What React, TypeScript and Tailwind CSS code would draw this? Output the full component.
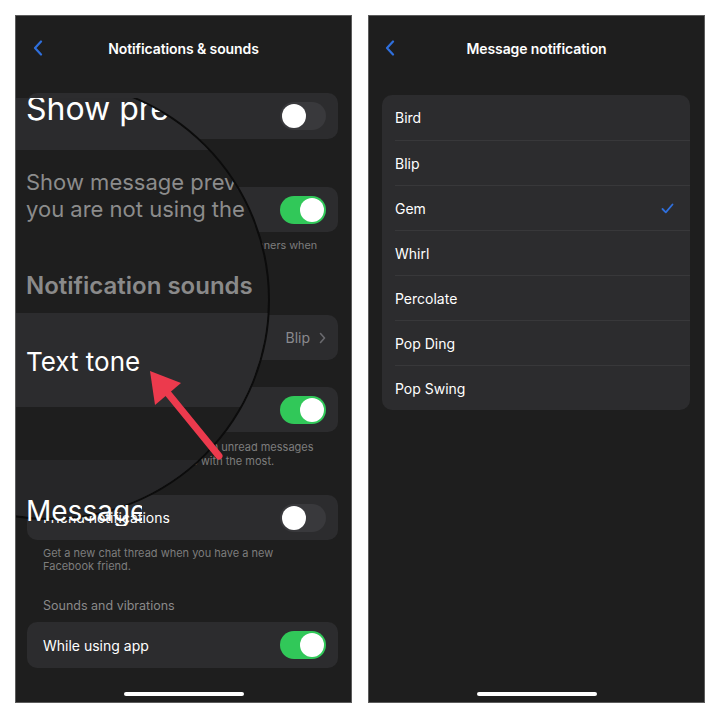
import React from 'react';

const Toggle = ({ on }: { on: boolean }) => (
    <div
        className={`w-[46px] h-[28px] rounded-full p-[2px] flex ${on ? 'bg-[#31c859] justify-end' : 'bg-[#39393c] justify-start'}`}
    >
        <div className="w-[24px] h-[24px] rounded-full bg-white" />
    </div>
);

const BackChevron = () => (
    <svg width="10" height="16" viewBox="0 0 10 16" fill="none">
        <path d="M8 1.5 L2 8 L8 14.5" stroke="#2f6fdc" strokeWidth="2.2" strokeLinecap="round" strokeLinejoin="round" />
    </svg>
);

const NavBar = ({ title, pad }: { title: string; pad: string }) => (
    <div className="h-[64px] shrink-0 grid grid-cols-[1fr_auto_1fr] items-center">
        <div className={pad}>
            <BackChevron />
        </div>
        <div className="text-[14px] font-semibold text-white tracking-[-0.1px]">{title}</div>
        <div />
    </div>
);

const Card = ({ children, className = '' }: { children: React.ReactNode; className?: string }) => (
    <div className={`ml-[11px] mr-[13px] h-[45px] rounded-[10px] bg-[#2c2c2e] flex items-center justify-between pl-4 pr-[12px] ${className}`}>
        {children}
    </div>
);

const HomeBar = () => <div className="mt-auto mb-[6px] self-center w-[120px] h-[4px] rounded-full bg-white" />;

const tones = ['Bird', 'Blip', 'Gem', 'Whirl', 'Percolate', 'Pop Ding', 'Pop Swing'];

const LeftPhone = () => (
    <div className="relative w-[337px] h-[688px] bg-[#1e1e1e] border border-[#5c5c5c] overflow-hidden flex flex-col">
        <NavBar title="Notifications & sounds" pad="pl-[17px]" />

        <Card className="mt-[13px] h-[46px]">
            <span className="text-[14px] text-white">Show previews</span>
            <Toggle on={false} />
        </Card>

        <Card className="mt-[48px]">
            <span className="text-[14px] text-white">Message previews</span>
            <Toggle on />
        </Card>
        <div className="ml-[27px] mt-[7px] text-[10.8px] leading-[13px] text-[#7d7d7d] whitespace-nowrap">
            <div>Show message previews in notification banners when</div>
            <div>you are not using the app.</div>
        </div>

        <div className="ml-[27px] mt-[22px] text-[12.5px] leading-[16px] text-[#8a8a8a]">Notification sounds</div>

        <Card className="mt-[12px]">
            <span className="text-[14px] text-white">Text tone</span>
            <div className="flex items-center gap-[9px] text-[14px] text-[#8a8a8e]">
                <span>Blip</span>
                <svg width="7" height="12" viewBox="0 0 7 12" fill="none">
                    <path d="M1.5 1.5 L5.5 6 L1.5 10.5" stroke="#6a6a6e" strokeWidth="1.6" strokeLinecap="round" strokeLinejoin="round" />
                </svg>
            </div>
        </Card>

        <Card className="mt-[27px]">
            <span className="text-[14px] text-white">Reminders</span>
            <Toggle on />
        </Card>
        <div className="ml-[27px] mt-[8px] text-[11px] leading-[14px] text-[#7d7d7d] whitespace-nowrap">
            <div>Get notified of conversations with unread messages</div>
            <div>from the people you message with the most.</div>
        </div>

        <Card className="mt-[27px]">
            <span className="text-[14px] text-white">Friend notifications</span>
            <Toggle on={false} />
        </Card>
        <div className="ml-[27px] mt-[7px] text-[11px] leading-[13px] text-[#7d7d7d]">
            <div>Get a new chat thread when you have a new</div>
            <div>Facebook friend.</div>
        </div>

        <div className="ml-[27px] mt-[25px] text-[12.5px] leading-[16px] text-[#8a8a8a]">Sounds and vibrations</div>

        <Card className="mt-[8px] h-[46px]">
            <span className="text-[14px] text-white">While using app</span>
            <Toggle on />
        </Card>

        <HomeBar />

        {/* magnifier lens, its top cut off where the zoomed shot starts */}
        <div className="absolute left-0 right-0 top-[82px] bottom-0 overflow-hidden pointer-events-none">
            <div className="absolute -left-[186px] -top-[18px] w-[440px] h-[440px] rounded-full overflow-hidden border-2 border-[#0c0c0c] bg-[#1e1e1e]">
                <div className="absolute left-0 right-0 top-[11px] h-[57px] bg-[#2b2b2d]" />
                <div className="absolute left-[194px] top-[11px] text-[32px] leading-none text-white whitespace-nowrap">
                    Show previews
                </div>
                <div className="absolute left-[194px] top-[87px] text-[22px] leading-[27px] text-[#8c8c8c] whitespace-nowrap">
                    <div>Show message previews in banners when</div>
                    <div>you are not using the app.</div>
                </div>
                <div className="absolute left-[194px] top-[192px] text-[24px] leading-none font-semibold text-[#8a8a8a] whitespace-nowrap">
                    Notification sounds
                </div>
                <div className="absolute left-0 right-0 top-[231px] h-[94px] bg-[#2c2c2e]" />
                <div className="absolute left-[194px] top-[267px] text-[26px] leading-none text-white whitespace-nowrap">
                    Text tone
                </div>
                <div className="absolute left-0 right-0 top-[378px] h-[62px] bg-[#262628]" />
            </div>
        </div>

        <div className="absolute left-[10px] top-[480px] w-[116px] h-[30px] overflow-hidden">
            <div className="text-[28px] leading-none text-white whitespace-nowrap pt-[1px]">Message</div>
        </div>

        {/* red arrow */}
        <svg className="absolute inset-0 pointer-events-none" width="335" height="686" viewBox="16 16 335 686">
            <line x1="219" y1="456" x2="166" y2="391" stroke="#ec3a4d" strokeWidth="7" strokeLinecap="round" />
            <polygon points="150,371 181,383 155,405" fill="#ec3a4d" />
        </svg>
    </div>
);

const RightPhone = () => (
    <div className="w-[337px] h-[688px] bg-[#1e1e1e] border border-[#5c5c5c] overflow-hidden flex flex-col">
        <NavBar title="Message notification" pad="pl-[16px]" />
        <div className="mt-[15px] ml-[13px] mr-[14px] rounded-[10px] bg-[#2c2c2e]">
            {tones.map((tone, i) => (
                <div
                    key={tone}
                    className={`ml-[13px] h-[45px] flex items-center justify-between pr-[16px] ${i > 0 ? 'border-t border-[#38383a]' : ''}`}
                >
                    <span className="text-[14px] text-white">{tone}</span>
                    {tone === 'Gem' && (
                        <svg width="13" height="11" viewBox="0 0 13 11" fill="none">
                            <path d="M1.5 6 L4.8 9.3 L11.5 1.5" stroke="#2f6fdc" strokeWidth="1.8" strokeLinecap="round" strokeLinejoin="round" />
                        </svg>
                    )}
                </div>
            ))}
        </div>
        <HomeBar />
    </div>
);

const App = () => {
    return (
        <div className="w-[720px] h-[720px] bg-white flex gap-[16px] pt-[15px] pl-[15px] font-['Inter','Noto_Sans',sans-serif]">
            <LeftPhone />
            <RightPhone />
        </div>
    );
};

export default App;
